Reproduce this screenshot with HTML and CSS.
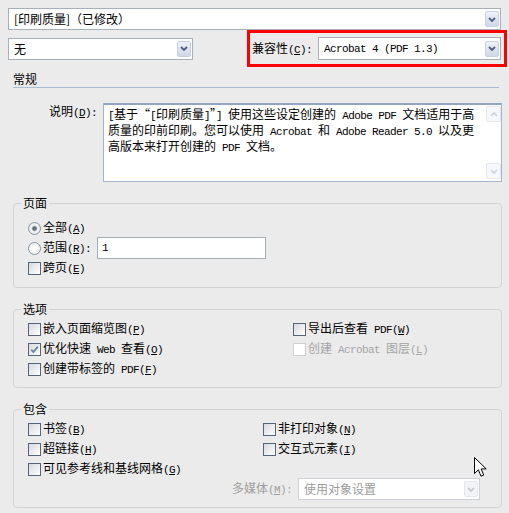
FILE: index.html
```html
<!DOCTYPE html>
<html lang="zh-CN">
<head>
<meta charset="UTF-8">
<title>导出 Adobe PDF</title>
<link rel="stylesheet" href="styles.css">
</head>
<body>
<div class="dialog">
  <div class="select top">
    <span class="value">[印刷质量]（已修改）</span>
    <span class="drop"><svg width="8" height="5" viewBox="0 0 8 5"><polyline points="1,1 4,4 7,1" fill="none" stroke="#4e5f80" stroke-width="1.8"/></svg></span>
  </div>

  <div class="toolbar">
    <div class="select short">
      <span class="value">无</span>
      <span class="drop"><svg width="8" height="5" viewBox="0 0 8 5"><polyline points="1,1 4,4 7,1" fill="none" stroke="#4e5f80" stroke-width="1.8"/></svg></span>
    </div>
    <div class="compat">
      <span>兼容性<span class="en">(<u>C</u>):</span></span>
      <div class="select">
        <span class="value en">Acrobat 4 (PDF 1.3)</span>
        <span class="drop"><svg width="8" height="5" viewBox="0 0 8 5"><polyline points="1,1 4,4 7,1" fill="none" stroke="#4e5f80" stroke-width="1.8"/></svg></span>
      </div>
    </div>
  </div>

  <div class="section-head">常规</div>

  <div class="desc">
    <span class="desc-label">说明<span class="en">(<u>D</u>):</span></span>
    <div class="memo">
      <div class="memo-text">
        <span class="en">[</span>基于“<span class="en">[</span>印刷质量<span class="en">]</span>”<span class="en">] </span>使用这些设定创建的<span class="en"> Adobe PDF </span>文档适用于高<br>
        质量的印前印刷。您可以使用<span class="en"> Acrobat </span>和<span class="en"> Adobe Reader 5.0 </span>以及更<br>
        高版本来打开创建的<span class="en"> PDF </span>文档。
      </div>
      <div class="scroll">
        <span class="sb-btn"><svg width="8" height="5" viewBox="0 0 8 5"><polyline points="1,4 4,1 7,4" fill="none" stroke="#c9d1dc" stroke-width="1.6"/></svg></span>
        <span class="sb-btn"><svg width="8" height="5" viewBox="0 0 8 5"><polyline points="1,1 4,4 7,1" fill="none" stroke="#c9d1dc" stroke-width="1.6"/></svg></span>
      </div>
    </div>
  </div>

  <fieldset class="group pages">
    <legend>页面</legend>
    <div class="opt"><span class="box radio on"></span><span>全部<span class="en">(<u>A</u>)</span></span></div>
    <div class="opt"><span class="box radio"></span><span>范围<span class="en">(<u>R</u>):</span></span><span class="field"><span class="en">1</span></span></div>
    <div class="opt"><span class="box"></span><span>跨页<span class="en">(<u>E</u>)</span></span></div>
  </fieldset>

  <fieldset class="group options">
    <legend>选项</legend>
    <div class="cols">
      <div class="opt"><span class="box"></span><span>嵌入页面缩览图<span class="en">(<u>P</u>)</span></span></div>
      <div class="opt"><span class="box"></span><span>导出后查看<span class="en"> PDF(<u>W</u>)</span></span></div>
      <div class="opt"><span class="box"><svg width="9" height="9" viewBox="0 0 9 9"><polyline points="1.2,4.6 3.4,7 7.8,1.6" fill="none" stroke="#6f87aa" stroke-width="1.9"/></svg></span><span>优化快速<span class="en"> Web </span>查看<span class="en">(<u>O</u>)</span></span></div>
      <div class="opt off"><span class="box"></span><span>创建<span class="en"> Acrobat </span>图层<span class="en">(<u>L</u>)</span></span></div>
      <div class="opt"><span class="box"></span><span>创建带标签的<span class="en"> PDF(<u>F</u>)</span></span></div>
    </div>
  </fieldset>

  <fieldset class="group include">
    <legend>包含</legend>
    <div class="cols">
      <div class="opt"><span class="box"></span><span>书签<span class="en">(<u>B</u>)</span></span></div>
      <div class="opt"><span class="box"></span><span>非打印对象<span class="en">(<u>N</u>)</span></span></div>
      <div class="opt"><span class="box"></span><span>超链接<span class="en">(<u>H</u>)</span></span></div>
      <div class="opt"><span class="box"></span><span>交互式元素<span class="en">(<u>I</u>)</span></span></div>
      <div class="opt span-all"><span class="box"></span><span>可见参考线和基线网格<span class="en">(<u>G</u>)</span></span></div>
      <div class="media span-all">
        <span>多媒体<span class="en">(<u>M</u>):</span></span>
        <div class="select disabled">
          <span class="value">使用对象设置</span>
          <span class="drop"><svg width="8" height="5" viewBox="0 0 8 5"><polyline points="1,1 4,4 7,1" fill="none" stroke="#c8ccd2" stroke-width="1.8"/></svg></span>
        </div>
      </div>
    </div>
  </fieldset>

  <svg class="cursor" width="13" height="21" viewBox="0 0 13 21"><path d="M0.5 0.5V16.5L4.4 12.8L7 19.2L9.7 18.1L7.2 11.9H12.2Z" fill="#fff" stroke="#000"/></svg>
</div>
</body>
</html>
```

FILE: styles.css
```css
body {
  margin: 0;
  background: #ebebeb;
  font-family: "Noto Sans CJK SC", "Liberation Sans", sans-serif;
  font-size: 12px;
  line-height: 16px;
  color: #000;
}
.dialog {
  position: relative;
  padding: 8px 7px 0 8px;
}
.en {
  font-family: "Liberation Mono", monospace;
  font-size: 11px;
  letter-spacing: -0.6px;
}

/* 下拉框 */
.select {
  display: flex;
  align-items: center;
  height: 22px;
  box-sizing: border-box;
  border: 1px solid #a7afb9;
  background: #fff;
}
.select .value {
  flex: 1;
  padding-left: 5px;
  white-space: nowrap;
  overflow: hidden;
}
.drop {
  display: flex;
  align-items: center;
  justify-content: center;
  width: 14px;
  height: 16px;
  box-sizing: border-box;
  margin-right: 1px;
  border: 1px solid #c6d1e3;
  border-radius: 2px;
  background: linear-gradient(#eef2f9, #cfd8e8);
}
.select.top {
  margin-right: 1px;
}
.toolbar {
  display: flex;
  justify-content: space-between;
  align-items: center;
  margin-right: -5px;
}
.select.short {
  width: 185px;
}
.compat {
  display: flex;
  align-items: center;
  width: 260px;
  box-sizing: border-box;
  border: 3px solid #f00;
  padding: 4px 3px 4px 2px;
}
.compat .select {
  width: 183px;
  height: 23px;
  margin-left: auto;
}
.select.disabled {
  border-color: #cdd1d7;
  color: #9c9c9c;
}
.select.disabled .drop {
  border-color: #e4e6ea;
  background: #f3f4f6;
}

/* 常规 */
.section-head {
  margin: 4px 3px 0 5px;
  border-bottom: 1px solid #a9bdd9;
}
.desc {
  display: flex;
  margin-top: 15px;
}
.desc-label {
  width: 84px;
  margin: 0 6px 0 5px;
  text-align: right;
}
.memo {
  flex: 1;
  display: flex;
  height: 79px;
  box-sizing: border-box;
  border: 1px solid #a3b4cc;
  border-top: 2px solid #8fa5c2;
  background: #fff;
}
.memo-text {
  flex: 1;
  padding: 2px 0 0 4px;
  line-height: 13px;
  white-space: nowrap;
  overflow: hidden;
}
.scroll {
  display: flex;
  flex-direction: column;
  justify-content: space-between;
  width: 15px;
  padding: 1px 0 2px;
}
.sb-btn {
  display: flex;
  align-items: center;
  justify-content: center;
  height: 16px;
  box-sizing: border-box;
  border: 1px solid #e3e8ef;
  border-radius: 2px;
  background: #f6f8fb;
}

/* 分组框 */
.group {
  margin: 14px 0 0 5px;
  padding: 3px 13px 8px 14px;
  border: 1px solid #d2d2d2;
  border-radius: 4px;
  min-width: 0;
}
.group legend {
  padding: 0 2px;
  margin-left: -7px;
  line-height: 14px;
}
.group.pages {
  padding-top: 8px;
  padding-bottom: 9px;
}
.opt {
  display: flex;
  align-items: center;
  height: 20px;
  white-space: nowrap;
}
.box {
  display: flex;
  align-items: center;
  justify-content: center;
  flex: none;
  width: 13px;
  height: 13px;
  box-sizing: border-box;
  margin-right: 2px;
  border: 1px solid #56647a;
  background: linear-gradient(135deg, #d6d9de, #fff);
}
.box.radio {
  border-radius: 50%;
  border-color: #8a96a6;
  background: radial-gradient(circle, #fff 30%, #dde1e6);
}
.box.radio.on {
  background: radial-gradient(circle, #66707c 0 1.8px, #b3bac4 2.4px, #f7f8fa 3.4px, #dde1e6 6px);
}
.opt.off {
  color: #a5a5a5;
}
.opt.off .box {
  border-color: #d0d0d0;
  background: #fff;
}
.field {
  display: flex;
  align-items: center;
  width: 169px;
  height: 22px;
  box-sizing: border-box;
  margin-left: 6px;
  padding-left: 4px;
  border: 1px solid #a7afb9;
  background: #fff;
}
.cols {
  display: grid;
  grid-template-columns: 265px 1fr;
}
.include .cols {
  grid-template-columns: 235px 1fr;
}
.span-all {
  grid-column: 1 / -1;
}
.media {
  display: flex;
  align-items: center;
  height: 20px;
  margin-left: 204px;
  color: #9e9e9e;
}
.media .select {
  width: 182px;
  margin-left: 6px;
}
.cursor {
  position: absolute;
  left: 474px;
  top: 457px;
}
```
